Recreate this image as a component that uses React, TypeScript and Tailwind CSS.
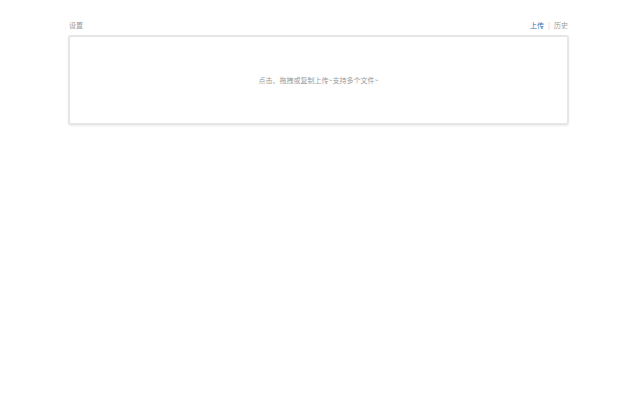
export default function App() {
	return (
		<div
			className="min-h-[400px] bg-white"
			style={{ fontFamily: '"Noto Sans CJK SC", "Noto Sans", sans-serif' }}
		>
			<div className="ml-[68px] w-[501px] pt-[19px]">
				{/* Header */}
				<div className="flex items-center justify-between px-px text-[7px] leading-[12px]">
					<span className="text-[#999]">设置</span>
					<div className="flex items-center gap-[4px]">
						<span className="text-[#2a6fb5]">上传</span>
						<span className="text-[#ccc]">|</span>
						<span className="text-[#999]">历史</span>
					</div>
				</div>

				{/* Upload area */}
				<div className="mt-[4px] flex h-[90px] items-center justify-center rounded-[3px] border-2 border-[#e6e6e6] shadow-[0_1px_2px_rgba(0,0,0,0.08)]">
					<span className="text-[7px] text-[#999]">
						点击、拖拽或复制上传~支持多个文件~
					</span>
				</div>
			</div>
		</div>
	);
}
